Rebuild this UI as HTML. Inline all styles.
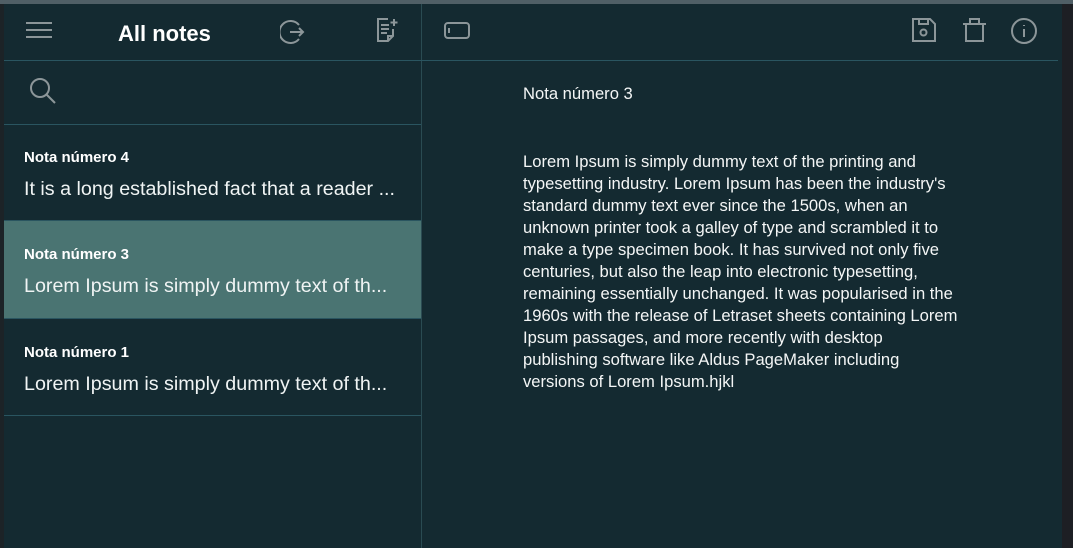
<!DOCTYPE html>
<html><head><meta charset="utf-8"><style>
*{margin:0;padding:0;box-sizing:border-box}
body{width:1073px;height:548px;overflow:hidden;background:#142a31;font-family:"Liberation Sans",sans-serif;color:#fff;position:relative}
.abs{position:absolute}
.top{left:0;top:0;width:1073px;height:4px;background:#505f66}
.lstrip{left:0;top:4px;width:4px;height:544px;background:#1c2327}
.rstrip{left:1062px;top:4px;width:11px;height:544px;background:#1d1f24}
.hline{height:1px;background:#2a5560}
.vline{left:421px;top:4px;width:1px;height:544px;background:#2a4b52}
.item{left:4px;width:417px;height:97px;border-bottom:1px solid #2a5560}
.item .t{position:absolute;left:20px;top:25px;font-weight:bold;font-size:15px}
.item .b{position:absolute;left:20px;top:54px;font-size:19.7px;white-space:nowrap;color:#f0f4f4}
.ed{left:523px;font-size:16.6px;line-height:22px;white-space:nowrap;color:#f4f6f6}
svg{position:absolute;fill:none;stroke:#8c9699;stroke-width:2}
</style></head><body>
<div class="abs top"></div>
<div class="abs lstrip"></div>
<div class="abs rstrip"></div>
<div class="abs vline"></div>
<div class="abs hline" style="left:4px;top:60px;width:1054px"></div>
<div class="abs hline" style="left:4px;top:124px;width:417px"></div>

<svg style="left:26px;top:22px" width="28" height="18"><path d="M0 1H26M0 8H26M0 15H26"/></svg>
<div class="abs" style="left:118px;top:21px;font-size:22px;font-weight:bold">All notes</div>
<svg style="left:280px;top:19px" width="28" height="26"><path d="M19 6A11 11 0 1 0 19 20M10 13H23M19 9L23 13L19 17"/></svg>
<svg style="left:375px;top:17px" width="26" height="26" stroke-width="1.6"><path d="M13 2H3V24H13L18 19V12M6 8H14M6 12H14M6 16H12M13 24V19H18M19 2V9M15.5 5.5H22.5"/></svg>
<svg style="left:443px;top:21px" width="28" height="20"><rect x="2" y="2" width="24" height="15" rx="3"/><path d="M6 7V12"/></svg>
<svg style="left:910px;top:17px" width="28" height="28"><path d="M3 2H20L25 7V24H3ZM9 2V7H18V2"/><circle cx="13.5" cy="15.5" r="3"/></svg>
<svg style="left:961px;top:17px" width="28" height="28"><path d="M2 7H25M9 7V2H18V7M5 7V24H22V7"/></svg>
<svg style="left:1010px;top:17px" width="28" height="28"><circle cx="14" cy="14" r="12"/><path d="M14 12V20M14 8V9"/></svg>

<svg style="left:29px;top:77px" width="30" height="30"><circle cx="11" cy="11" r="9"/><path d="M17 17L26 26"/></svg>

<div class="abs item" style="top:124px"><div class="t">Nota número 4</div><div class="b">It is a long established fact that a reader ...</div></div>
<div class="abs item" style="top:221px;background:#4a7472;height:98px"><div class="t">Nota número 3</div><div class="b">Lorem Ipsum is simply dummy text of th...</div></div>
<div class="abs item" style="top:319px"><div class="t">Nota número 1</div><div class="b">Lorem Ipsum is simply dummy text of th...</div></div>

<div class="abs ed" style="top:83px">Nota número 3</div>
<div class="abs ed" style="top:151px">Lorem Ipsum is simply dummy text of the printing and<br>typesetting industry. Lorem Ipsum has been the industry's<br>standard dummy text ever since the 1500s, when an<br>unknown printer took a galley of type and scrambled it to<br>make a type specimen book. It has survived not only five<br>centuries, but also the leap into electronic typesetting,<br>remaining essentially unchanged. It was popularised in the<br>1960s with the release of Letraset sheets containing Lorem<br>Ipsum passages, and more recently with desktop<br>publishing software like Aldus PageMaker including<br>versions of Lorem Ipsum.hjkl</div>
</body></html>
